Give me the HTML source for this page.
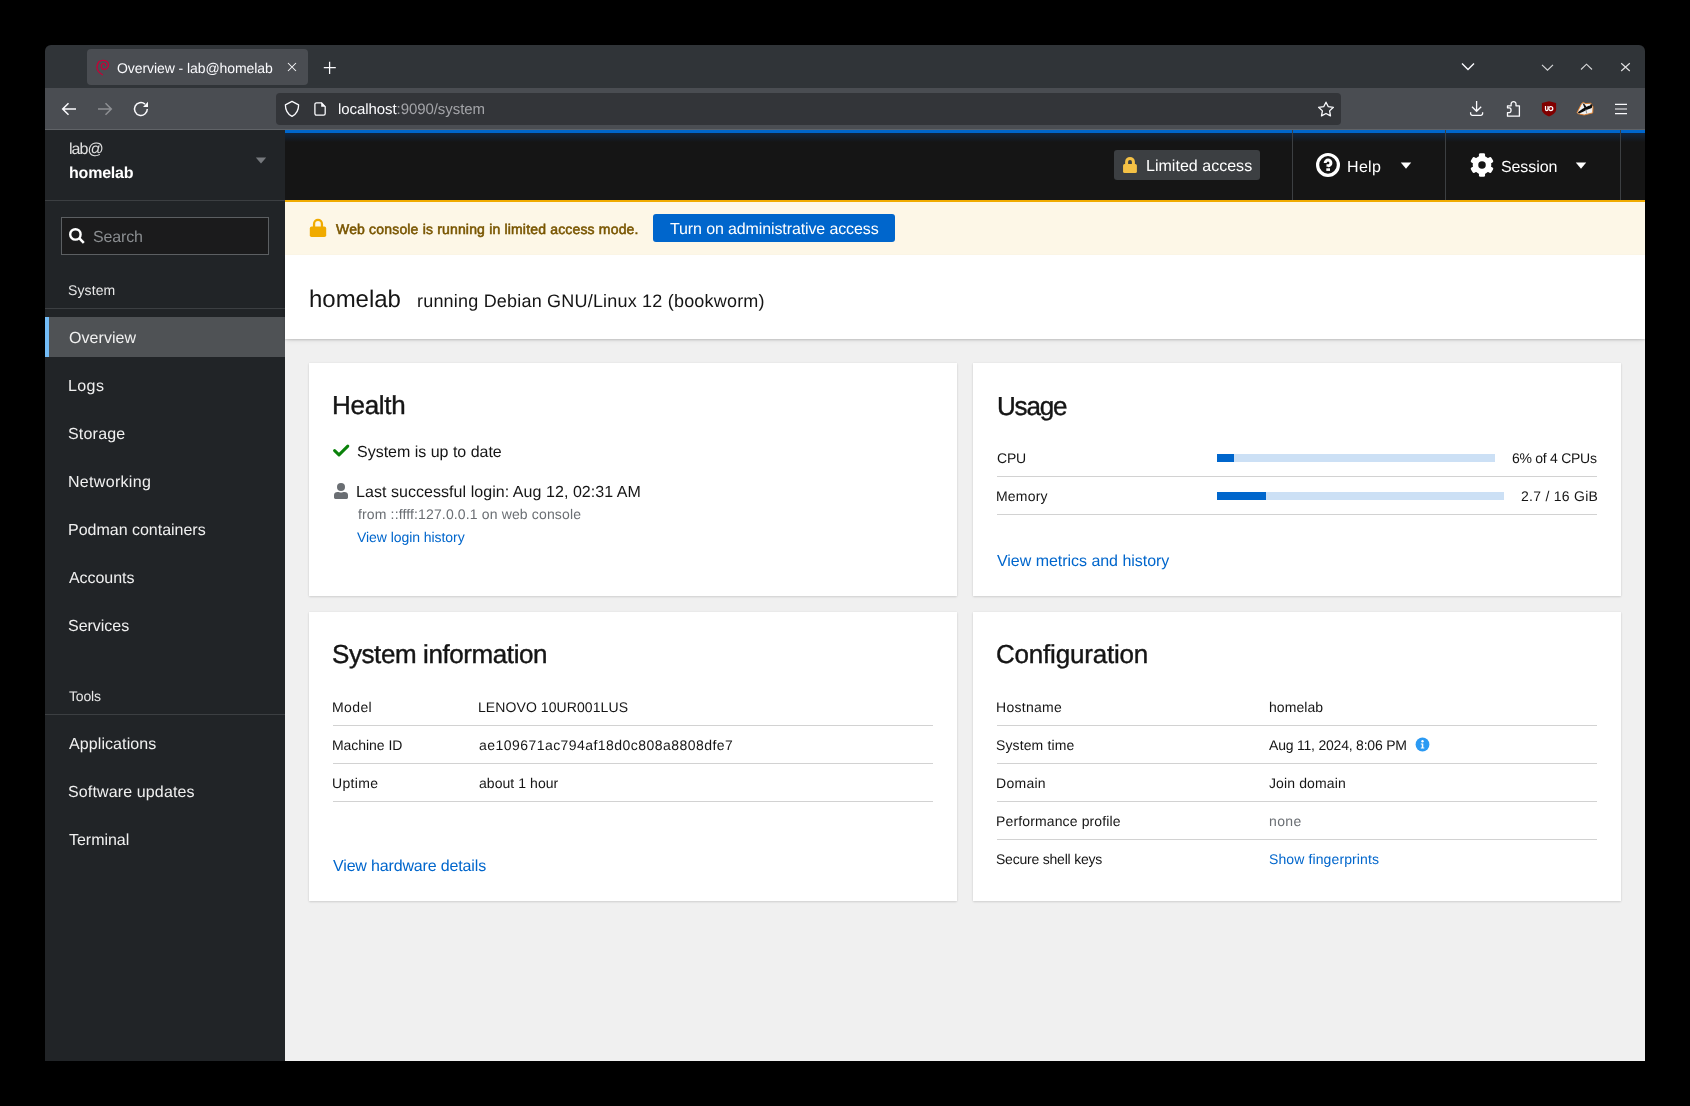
<!DOCTYPE html>
<html><head><meta charset="utf-8"><style>
html,body{margin:0;padding:0;}
body{width:1690px;height:1106px;background:#000;position:relative;overflow:hidden;font-family:"Liberation Sans",sans-serif;text-rendering:geometricPrecision;}
.a{position:absolute;}
.t{position:absolute;white-space:nowrap;font-family:"Liberation Sans",sans-serif;will-change:transform;}
svg{position:absolute;overflow:visible;}
</style></head><body>
<!-- window chrome -->
<div class="a" style="left:45px;top:45px;width:1600px;height:43px;background:#303438;border-radius:6px 6px 0 0"></div>
<div class="a" style="left:87px;top:49px;width:221px;height:36px;background:#4a4d52;border-radius:4px"></div>
<div class="a" style="left:45px;top:88px;width:1600px;height:42px;background:#4a4d52"></div>
<div class="a" style="left:45px;top:129px;width:1600px;height:1px;background:#606367"></div>
<div class="a" style="left:276px;top:93px;width:1065px;height:32px;background:#333539;border-radius:4px"></div>
<!-- debian swirl -->
<svg style="left:96px;top:58px" width="16" height="18" viewBox="0 0 16 18"><path d="M6.4 16.7 C2.5 14.5 0.7 11.5 1 8.9 C1.4 4.5 4 2.3 6.8 2.3 C10.2 2.3 12.6 4.3 12.5 6.8 C12.4 9.5 10.3 11.5 8.2 11.5 C6.5 11.5 5.2 10 5.3 8.4 C5.4 6.5 6.6 5.4 7.7 5.4 C8.8 5.4 9.6 6.5 9.5 7.6" fill="none" stroke="#c70036" stroke-width="1.3" stroke-linecap="round"/></svg>
<!-- tab close -->
<svg style="left:287px;top:62px" width="10" height="10" viewBox="0 0 10 10"><path d="M1 1L9 9M9 1L1 9" stroke="#fbfbfe" stroke-width="1.05"/></svg>
<!-- new tab plus -->
<svg style="left:323px;top:61px" width="14" height="14" viewBox="0 0 14 14"><path d="M6.6 0.8V12.9M0.8 6.6H12.8" stroke="#fbfbfe" stroke-width="1.25"/></svg>
<!-- back -->
<svg style="left:61px;top:102px" width="16" height="14" viewBox="0 0 16 14"><path d="M7.5 1.2L1.7 7L7.5 12.8M1.7 7H15" fill="none" stroke="#fbfbfe" stroke-width="1.5"/></svg>
<!-- forward -->
<svg style="left:97px;top:102px" width="16" height="14" viewBox="0 0 16 14"><path d="M8.5 1.2L14.3 7L8.5 12.8M14.3 7H1" fill="none" stroke="#8e9094" stroke-width="1.5"/></svg>
<!-- reload -->
<svg style="left:133px;top:101px" width="16" height="16" viewBox="0 0 16 16"><path d="M14.3 8 A6.4 6.4 0 1 1 12.0 3.1" fill="none" stroke="#fbfbfe" stroke-width="1.5"/><path d="M15 0.8V5.9H10Z" fill="#fbfbfe"/></svg>
<!-- shield -->
<svg style="left:284px;top:100px" width="16" height="18" viewBox="0 0 16 18"><path d="M8 1.4L14.6 4.9C14.6 10 12 14.2 8 16.4C4 14.2 1.4 10 1.4 4.9Z" fill="none" stroke="#fbfbfe" stroke-width="1.3" stroke-linejoin="round"/></svg>
<!-- page -->
<svg style="left:313px;top:101px" width="14" height="16" viewBox="0 0 14 16"><path d="M3.5 1.8H8.4L12.2 5.6V12.6A1.6 1.6 0 0 1 10.6 14.2H3.5A1.6 1.6 0 0 1 1.9 12.6V3.4A1.6 1.6 0 0 1 3.5 1.8Z" fill="none" stroke="#fbfbfe" stroke-width="1.3" stroke-linejoin="round"/><path d="M8.2 1.4V5.8H12.6Z" fill="#fbfbfe"/></svg>
<!-- star -->
<svg style="left:1317px;top:100px" width="18" height="18" viewBox="0 0 18 18"><path d="M9 2.2L11.3 6.7L16.4 7.3L12.6 10.9L13.5 15.9L9 13.5L4.5 15.9L5.4 10.9L1.6 7.3L6.7 6.7Z" fill="none" stroke="#fbfbfe" stroke-width="1.3" stroke-linejoin="round"/></svg>
<!-- tab list chevron -->
<svg style="left:1461px;top:62px" width="14" height="10" viewBox="0 0 14 10"><path d="M1 1.5L7 7.5L13 1.5" fill="none" stroke="#fbfbfe" stroke-width="1.4"/></svg>
<!-- minimize -->
<svg style="left:1541px;top:63px" width="13" height="9" viewBox="0 0 13 9"><path d="M1 1.8L6.5 7.2L12 1.8" fill="none" stroke="#d6d7d8" stroke-width="1.15"/></svg>
<!-- maximize -->
<svg style="left:1580px;top:63px" width="13" height="8" viewBox="0 0 13 8"><path d="M1 6.5L6.5 1.2L12 6.5" fill="none" stroke="#d6d7d8" stroke-width="1.15"/></svg>
<!-- close -->
<svg style="left:1620px;top:62px" width="11" height="10" viewBox="0 0 11 10"><path d="M1.2 1.2L9.8 9M9.8 1.2L1.2 9" fill="none" stroke="#e0e0e1" stroke-width="1.15"/></svg>
<!-- download -->
<svg style="left:1469px;top:100px" width="16" height="17" viewBox="0 0 16 17"><path d="M7.6 1.1V11.2M3 6.8L7.6 11.3L12.2 6.8M1.6 12.2V13.5A1.8 1.8 0 0 0 3.4 15.3H11.8A1.8 1.8 0 0 0 13.6 13.5V12.2" fill="none" stroke="#fbfbfe" stroke-width="1.3"/></svg>
<!-- puzzle -->
<svg style="left:1506px;top:100px" width="15" height="18" viewBox="0 0 15 18"><path d="M1.5 16.2V12.6H3.4C5.6 12.6 5.6 7.9 3.4 7.9H1.5V5.8H5.1V4C5.1 0.9 10 0.9 10 4V5.8H13.4V16.2Z" fill="none" stroke="#fbfbfe" stroke-width="1.3" stroke-linejoin="round"/></svg>
<!-- ublock -->
<svg style="left:1542px;top:101px" width="15" height="16" viewBox="0 0 15 16"><path d="M7 0.2L14.1 2V9C14.1 11.8 9.5 14.5 7 15.5C4.5 14.5 -0.1 11.8 -0.1 9V2Z" fill="#800000"/><path d="M3.5 5V8C3.5 10.2 6 10.2 6 8V5" fill="none" stroke="#fff" stroke-width="1.2"/><circle cx="8.8" cy="7.6" r="2" fill="none" stroke="#fff" stroke-width="1.2"/><circle cx="8.8" cy="7.6" r="0.7" fill="#c00"/></svg>
<!-- badger -->
<svg style="left:1576px;top:101px" width="18" height="16" viewBox="0 0 18 16"><path d="M1.1 11.4L5.6 2.6L7.2 1.4L9.5 2.6L12.5 2.4L14.9 2.2L17 5.8L16.7 11.9L8.1 14L2.1 12.7Z" fill="#f2f2f2" stroke="#e07b22" stroke-width="0.9" stroke-linejoin="round"/><path d="M1.8 11.3L7 7.6L12.8 4.8L16.2 4.3L15.8 6.9L11 8.8L6.6 11.1L3 12.6Z" fill="#0a0a0a"/><path d="M6.6 2.2L8.4 3L10.6 6.2L8.6 7.2Z" fill="#111"/><circle cx="15.2" cy="4.4" r="1.1" fill="#111"/><path d="M10 8.5L10.6 12.4" stroke="#9a9a9a" stroke-width="1.1"/></svg>
<!-- menu -->
<svg style="left:1614px;top:102px" width="14" height="14" viewBox="0 0 14 14"><path d="M1 2.4H13M1 7H13M1 11.6H13" fill="none" stroke="#fbfbfe" stroke-width="1.2"/></svg>

<!-- sidebar -->
<div class="a" style="left:45px;top:130px;width:240px;height:931px;background:#212427"></div>
<div class="a" style="left:45px;top:200px;width:240px;height:1px;background:#3c3f42"></div>
<svg style="left:255px;top:157px" width="12" height="7" viewBox="0 0 12 7"><path d="M0.8 0.6H11.2L6 6.4Z" fill="#76797d"/></svg>
<div class="a" style="left:61px;top:217px;width:206px;height:36px;background:#1b1b1c;border:1px solid #5c5f62"></div>
<svg style="left:68px;top:227px" width="18" height="18" viewBox="0 0 18 18"><circle cx="7.4" cy="7.4" r="5.2" fill="none" stroke="#fff" stroke-width="2.4"/><path d="M11.2 11.2L15.8 15.8" stroke="#fff" stroke-width="2.6"/></svg>
<div class="a" style="left:45px;top:308px;width:240px;height:1px;background:#3c3f42"></div>
<div class="a" style="left:45px;top:317px;width:240px;height:40px;background:#4f5255"></div>
<div class="a" style="left:45px;top:317px;width:4px;height:40px;background:#73bcf7"></div>
<div class="a" style="left:45px;top:714px;width:240px;height:1px;background:#3c3f42"></div>

<!-- masthead -->
<div class="a" style="left:285px;top:130px;width:1360px;height:70px;background:#151515"></div>
<div class="a" style="left:285px;top:133px;width:1360px;height:9px;background:linear-gradient(#11253f,#151515)"></div>
<div class="a" style="left:285px;top:130px;width:1360px;height:3px;background:#0066cc"></div>
<div class="a" style="left:1292px;top:130px;width:1px;height:70px;background:#3c3f42"></div>
<div class="a" style="left:1445px;top:130px;width:1px;height:70px;background:#3c3f42"></div>
<div class="a" style="left:1620px;top:130px;width:1px;height:70px;background:#3c3f42"></div>
<div class="a" style="left:1114px;top:150px;width:146px;height:30px;background:#3c3f42;border-radius:3px"></div>
<svg style="left:1122px;top:156px" width="16" height="18" viewBox="0 0 16 18"><path d="M4.6 8.8V5.8A3.4 3.4 0 0 1 11.4 5.8V8.8" fill="none" stroke="#f4c145" stroke-width="3"/><rect x="1.05" y="8.1" width="13.85" height="8.8" rx="1.5" fill="#f4c145"/></svg>
<svg style="left:1315px;top:152px" width="26" height="26" viewBox="0 0 26 26"><circle cx="13" cy="12.9" r="10.4" fill="none" stroke="#fff" stroke-width="3.2"/><path d="M10.2 11 A2.85 2.85 0 1 1 13 13.8 V14.8" fill="none" stroke="#fff" stroke-width="3"/><rect x="11.3" y="16.3" width="3.7" height="2.6" fill="#fff"/></svg>
<svg style="left:1400px;top:162px" width="12" height="7" viewBox="0 0 12 7"><path d="M0.8 0.4H11.2L6 6.8Z" fill="#fff"/></svg>
<svg style="left:1470px;top:153px" width="24" height="24" viewBox="0 0 24 24"><g fill="#fff"><circle cx="12" cy="12" r="9.3"/><rect x="8.95" y="0.2" width="6.1" height="6" rx="1.4"/><rect x="8.95" y="0.2" width="6.1" height="6" rx="1.4" transform="rotate(60 12 12)"/><rect x="8.95" y="0.2" width="6.1" height="6" rx="1.4" transform="rotate(120 12 12)"/><rect x="8.95" y="0.2" width="6.1" height="6" rx="1.4" transform="rotate(180 12 12)"/><rect x="8.95" y="0.2" width="6.1" height="6" rx="1.4" transform="rotate(240 12 12)"/><rect x="8.95" y="0.2" width="6.1" height="6" rx="1.4" transform="rotate(300 12 12)"/></g><circle cx="12" cy="12" r="3.76" fill="#151515"/></svg>
<svg style="left:1575px;top:162px" width="12" height="7" viewBox="0 0 12 7"><path d="M0.8 0.4H11.2L6 6.8Z" fill="#fff"/></svg>

<!-- alert -->
<div class="a" style="left:285px;top:200px;width:1360px;height:55px;background:#fdf7e7"></div>
<div class="a" style="left:285px;top:200px;width:1360px;height:2px;background:#f0ab00"></div>
<svg style="left:309px;top:218px" width="18" height="20" viewBox="0 0 18 20"><path d="M5.05 9.5V5.9A3.95 3.95 0 0 1 12.95 5.9V9.5" fill="none" stroke="#f0ab00" stroke-width="2.3"/><rect x="0.8" y="8.6" width="16.4" height="10.4" rx="1.8" fill="#f0ab00"/></svg>
<div class="a" style="left:653px;top:214px;width:242px;height:28px;background:#0066cc;border-radius:3px"></div>

<!-- page header -->
<div class="a" style="left:285px;top:339px;width:1360px;height:722px;background:#f0f0f0"></div>
<div class="a" style="left:285px;top:255px;width:1360px;height:84px;background:#fff;box-shadow:0 1px 2px rgba(3,3,3,.14),0 3px 5px -2px rgba(3,3,3,.10)"></div>

<!-- cards -->
<div class="a" style="left:309px;top:363px;width:648px;height:233px;background:#fff;box-shadow:0 1px 2px 0 rgba(3,3,3,.12),0 0 2px 0 rgba(3,3,3,.06)"></div>
<div class="a" style="left:973px;top:363px;width:648px;height:233px;background:#fff;box-shadow:0 1px 2px 0 rgba(3,3,3,.12),0 0 2px 0 rgba(3,3,3,.06)"></div>
<div class="a" style="left:309px;top:612px;width:648px;height:289px;background:#fff;box-shadow:0 1px 2px 0 rgba(3,3,3,.12),0 0 2px 0 rgba(3,3,3,.06)"></div>
<div class="a" style="left:973px;top:612px;width:648px;height:289px;background:#fff;box-shadow:0 1px 2px 0 rgba(3,3,3,.12),0 0 2px 0 rgba(3,3,3,.06)"></div>

<!-- health icons -->
<svg style="left:333px;top:444px" width="17" height="14" viewBox="0 0 17 14"><path d="M1.6 6.6L6 10.9L14.8 2.1" fill="none" stroke="#0a820a" stroke-width="3" stroke-linecap="round" stroke-linejoin="round"/></svg>
<svg style="left:333px;top:482px" width="16" height="18" viewBox="0 0 16 18"><circle cx="8" cy="5" r="4" fill="#6a6e73"/><path d="M1 16.9V13C1 10.9 2.5 9.9 4.5 9.9C6 9.9 6.8 10.5 8 10.5C9.2 10.5 10 9.9 11.5 9.9C13.5 9.9 15 10.9 15 13V15.5A1.4 1.4 0 0 1 13.6 16.9H2.4A1.4 1.4 0 0 1 1 15.5Z" fill="#6a6e73"/></svg>

<!-- usage bars -->
<div class="a" style="left:1217px;top:454px;width:278px;height:8px;background:#cce0f5"></div>
<div class="a" style="left:1217px;top:454px;width:17px;height:8px;background:#0066cc"></div>
<div class="a" style="left:1217px;top:492px;width:287px;height:8px;background:#cce0f5"></div>
<div class="a" style="left:1217px;top:492px;width:49px;height:8px;background:#0066cc"></div>
<div class="a" style="left:997px;top:476px;width:600px;height:1px;background:#d2d2d2"></div>
<div class="a" style="left:997px;top:514px;width:600px;height:1px;background:#d2d2d2"></div>

<!-- sysinfo dividers -->
<div class="a" style="left:333px;top:725px;width:600px;height:1px;background:#d2d2d2"></div>
<div class="a" style="left:333px;top:763px;width:600px;height:1px;background:#d2d2d2"></div>
<div class="a" style="left:333px;top:801px;width:600px;height:1px;background:#d2d2d2"></div>
<!-- config dividers -->
<div class="a" style="left:997px;top:725px;width:600px;height:1px;background:#d2d2d2"></div>
<div class="a" style="left:997px;top:763px;width:600px;height:1px;background:#d2d2d2"></div>
<div class="a" style="left:997px;top:801px;width:600px;height:1px;background:#d2d2d2"></div>
<div class="a" style="left:997px;top:839px;width:600px;height:1px;background:#d2d2d2"></div>
<svg style="left:1414.6px;top:737.4px" width="15" height="15" viewBox="0 0 15 15"><circle cx="7.5" cy="7.5" r="6.9" fill="#2b9af3"/><circle cx="7.5" cy="4.2" r="1.2" fill="#fff"/><path d="M5.8 6.4H8.3V10.6H9.3V11.6H5.8V10.6H6.8V7.4H5.8Z" fill="#fff"/></svg>

<div id="tab" class="t" style="left:116.80px;top:60.71px;font-size:14px;line-height:14px;letter-spacing:-0.076px;color:#fbfbfe;">Overview - lab@homelab</div>
<div id="url" class="t" style="left:337.80px;top:101.81px;font-size:15px;line-height:15px;letter-spacing:-0.070px;color:#fbfbfe;">localhost<span style="color:#a3a4a8">:9090/system</span></div>
<div id="lab" class="t" style="left:69.10px;top:141.91px;font-size:16px;line-height:16px;letter-spacing:-0.933px;color:#e0e0e0;">lab@</div>
<div id="host" class="t" style="left:69.10px;top:165.81px;font-size:16px;line-height:16px;letter-spacing:-0.200px;color:#ffffff;font-weight:bold;">homelab</div>
<div id="search" class="t" style="left:93.00px;top:230.01px;font-size:16px;line-height:16px;letter-spacing:-0.160px;color:#8a8d90;">Search</div>
<div id="sys" class="t" style="left:68.40px;top:283.41px;font-size:14px;line-height:14px;letter-spacing:0.120px;color:#e8e8e8;">System</div>
<div id="nav0" class="t" style="left:68.80px;top:331.01px;font-size:16px;line-height:16px;letter-spacing:0.057px;color:#f0f0f0;">Overview</div>
<div id="nav1" class="t" style="left:68.40px;top:379.01px;font-size:16px;line-height:16px;letter-spacing:0.400px;color:#f0f0f0;">Logs</div>
<div id="nav2" class="t" style="left:68.40px;top:427.01px;font-size:16px;line-height:16px;letter-spacing:0.200px;color:#f0f0f0;">Storage</div>
<div id="nav3" class="t" style="left:68.40px;top:475.01px;font-size:16px;line-height:16px;letter-spacing:0.312px;color:#f0f0f0;">Networking</div>
<div id="nav4" class="t" style="left:68.40px;top:523.01px;font-size:16px;line-height:16px;letter-spacing:-0.013px;color:#f0f0f0;">Podman containers</div>
<div id="nav5" class="t" style="left:69.20px;top:571.01px;font-size:16px;line-height:16px;letter-spacing:-0.057px;color:#f0f0f0;">Accounts</div>
<div id="nav6" class="t" style="left:68.40px;top:619.01px;font-size:16px;line-height:16px;letter-spacing:-0.028px;color:#f0f0f0;">Services</div>
<div id="tools" class="t" style="left:69.20px;top:689.01px;font-size:14px;line-height:14px;letter-spacing:-0.200px;color:#e8e8e8;">Tools</div>
<div id="navb0" class="t" style="left:69.20px;top:736.81px;font-size:16px;line-height:16px;letter-spacing:0.091px;color:#f0f0f0;">Applications</div>
<div id="navb1" class="t" style="left:68.40px;top:785.01px;font-size:16px;line-height:16px;letter-spacing:0.133px;color:#f0f0f0;">Software updates</div>
<div id="navb2" class="t" style="left:69.20px;top:833.01px;font-size:16px;line-height:16px;letter-spacing:-0.028px;color:#f0f0f0;">Terminal</div>
<div id="limited" class="t" style="left:1146.10px;top:159.01px;font-size:16px;line-height:16px;letter-spacing:0.024px;color:#ffffff;">Limited access</div>
<div id="help" class="t" style="left:1347.20px;top:159.51px;font-size:16px;line-height:16px;letter-spacing:0.333px;color:#ffffff;">Help</div>
<div id="session" class="t" style="left:1501.00px;top:159.51px;font-size:16px;line-height:16px;letter-spacing:-0.100px;color:#ffffff;">Session</div>
<div id="alert" class="t" style="left:335.60px;top:221.90px;font-size:14px;line-height:14px;letter-spacing:0.173px;color:#795600;-webkit-text-stroke:0.55px #795600;">Web console is running in limited access mode.</div>
<div id="btn" class="t" style="left:669.60px;top:222.21px;font-size:16px;line-height:16px;letter-spacing:-0.118px;color:#ffffff;">Turn on administrative access</div>
<div id="h_host" class="t" style="left:309.00px;top:287.81px;font-size:24px;line-height:24px;letter-spacing:-0.034px;color:#151515;">homelab</div>
<div id="h_run" class="t" style="left:417.00px;top:291.81px;font-size:18px;line-height:18px;letter-spacing:0.200px;color:#151515;">running Debian GNU/Linux 12 (bookworm)</div>
<div id="health" class="t" style="left:332.00px;top:392.01px;font-size:26px;line-height:26px;letter-spacing:-0.280px;color:#151515;-webkit-text-stroke:0.4px #151515;">Health</div>
<div id="uptodate" class="t" style="left:356.80px;top:444.60px;font-size:16px;line-height:16px;letter-spacing:-0.011px;color:#151515;">System is up to date</div>
<div id="lastlogin" class="t" style="left:356.40px;top:485.01px;font-size:16px;line-height:16px;letter-spacing:0.053px;color:#151515;">Last successful login: Aug 12, 02:31 AM</div>
<div id="from" class="t" style="left:357.80px;top:506.81px;font-size:14px;line-height:14px;letter-spacing:0.143px;color:#6a6e73;">from ::ffff:127.0.0.1 on web console</div>
<div id="viewlogin" class="t" style="left:356.80px;top:529.91px;font-size:14px;line-height:14px;letter-spacing:-0.059px;color:#0066cc;">View login history</div>
<div id="usage" class="t" style="left:996.60px;top:392.51px;font-size:26px;line-height:26px;letter-spacing:-1.200px;color:#151515;-webkit-text-stroke:0.4px #151515;">Usage</div>
<div id="cpu" class="t" style="left:996.80px;top:450.91px;font-size:14px;line-height:14px;letter-spacing:-0.200px;color:#151515;">CPU</div>
<div id="mem" class="t" style="left:996.20px;top:489.01px;font-size:14px;line-height:14px;letter-spacing:0.200px;color:#151515;">Memory</div>
<div id="cpuv" class="t" style="left:1511.70px;top:451.01px;font-size:14px;line-height:14px;letter-spacing:-0.273px;color:#151515;">6% of 4 CPUs</div>
<div id="memv" class="t" style="left:1520.70px;top:489.01px;font-size:14px;line-height:14px;letter-spacing:0.273px;color:#151515;">2.7 / 16 GiB</div>
<div id="metrics" class="t" style="left:996.80px;top:553.81px;font-size:16px;line-height:16px;letter-spacing:-0.035px;color:#0066cc;">View metrics and history</div>
<div id="sysinfo" class="t" style="left:332.40px;top:640.81px;font-size:26px;line-height:26px;letter-spacing:-0.411px;color:#151515;-webkit-text-stroke:0.4px #151515;">System information</div>
<div id="sik0" class="t" style="left:332.40px;top:700.01px;font-size:14px;line-height:14px;letter-spacing:0.400px;color:#151515;">Model</div>
<div id="siv0" class="t" style="left:478.00px;top:700.01px;font-size:14px;line-height:14px;letter-spacing:0.087px;color:#151515;">LENOVO 10UR001LUS</div>
<div id="sik1" class="t" style="left:332.40px;top:738.31px;font-size:14px;line-height:14px;letter-spacing:-0.045px;color:#151515;">Machine ID</div>
<div id="siv1" class="t" style="left:479.00px;top:738.31px;font-size:14px;line-height:14px;letter-spacing:0.451px;color:#151515;">ae109671ac794af18d0c808a8808dfe7</div>
<div id="sik2" class="t" style="left:332.40px;top:776.01px;font-size:14px;line-height:14px;letter-spacing:0.360px;color:#151515;">Uptime</div>
<div id="siv2" class="t" style="left:479.00px;top:776.01px;font-size:14px;line-height:14px;letter-spacing:0.055px;color:#151515;">about 1 hour</div>
<div id="hw" class="t" style="left:333.30px;top:859.01px;font-size:16px;line-height:16px;letter-spacing:-0.155px;color:#0066cc;">View hardware details</div>
<div id="config" class="t" style="left:996.40px;top:641.21px;font-size:26px;line-height:26px;letter-spacing:-0.200px;color:#151515;-webkit-text-stroke:0.4px #151515;">Configuration</div>
<div id="cfk0" class="t" style="left:996.40px;top:699.71px;font-size:14px;line-height:14px;letter-spacing:0.286px;color:#151515;">Hostname</div>
<div id="cfv0" class="t" style="left:1269.40px;top:699.71px;font-size:14px;line-height:14px;letter-spacing:0.066px;color:#151515;">homelab</div>
<div id="cfk1" class="t" style="left:996.40px;top:737.71px;font-size:14px;line-height:14px;letter-spacing:0.120px;color:#151515;">System time</div>
<div id="cfv1" class="t" style="left:1269.40px;top:737.71px;font-size:14px;line-height:14px;letter-spacing:-0.210px;color:#151515;">Aug 11, 2024, 8:06 PM</div>
<div id="cfk2" class="t" style="left:996.40px;top:775.71px;font-size:14px;line-height:14px;letter-spacing:0.280px;color:#151515;">Domain</div>
<div id="cfv2" class="t" style="left:1269.40px;top:775.71px;font-size:14px;line-height:14px;letter-spacing:0.120px;color:#151515;">Join domain</div>
<div id="cfk3" class="t" style="left:996.40px;top:813.71px;font-size:14px;line-height:14px;letter-spacing:0.133px;color:#151515;">Performance profile</div>
<div id="cfv3" class="t" style="left:1269.40px;top:813.71px;font-size:14px;line-height:14px;letter-spacing:0.400px;color:#6a6e73;">none</div>
<div id="cfk4" class="t" style="left:996.40px;top:851.71px;font-size:14px;line-height:14px;letter-spacing:-0.213px;color:#151515;">Secure shell keys</div>
<div id="cfv4" class="t" style="left:1269.40px;top:851.71px;font-size:14px;line-height:14px;letter-spacing:0.112px;color:#0066cc;">Show fingerprints</div>
</body></html>
